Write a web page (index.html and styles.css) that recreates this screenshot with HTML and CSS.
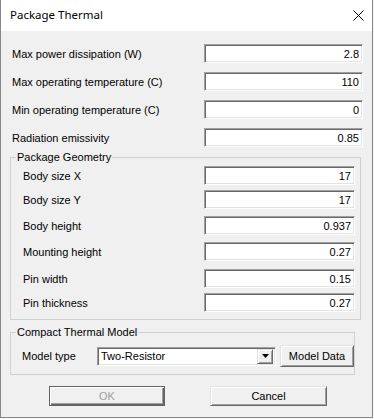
FILE: index.html
```html
<!DOCTYPE html>
<html lang="en">
<head>
  <meta charset="UTF-8">
  <title>Package Thermal</title>
  <link rel="stylesheet" href="styles.css">
</head>
<body>

  <div class="window">
    <div class="titlebar">
      <span class="title">Package Thermal</span>
      <svg class="close" width="11" height="11" viewBox="0 0 11 11">
        <path d="M0.5 0.5 L10.5 10.5 M10.5 0.5 L0.5 10.5" stroke="#000" stroke-width="1" fill="none"/>
      </svg>
    </div>

    <div class="client">
      <div class="row top"><label>Max power dissipation (W)</label><input class="field" value="2.8"></div>
      <div class="row top"><label>Max operating temperature (C)</label><input class="field" value="110"></div>
      <div class="row top"><label>Min operating temperature (C)</label><input class="field" value="0"></div>
      <div class="row top last"><label>Radiation emissivity</label><input class="field" value="0.85"></div>

      <fieldset class="group geo">
        <legend>Package Geometry</legend>
        <div class="row"><label>Body size X</label><input class="field" value="17"></div>
        <div class="row tight"><label>Body size Y</label><input class="field" value="17"></div>
        <div class="row"><label>Body height</label><input class="field" value="0.937"></div>
        <div class="row"><label>Mounting height</label><input class="field" value="0.27"></div>
        <div class="row wide"><label>Pin width</label><input class="field" value="0.15"></div>
        <div class="row tight"><label>Pin thickness</label><input class="field" value="0.27"></div>
      </fieldset>

      <fieldset class="group ctm">
        <legend>Compact Thermal Model</legend>
        <div class="model-row">
          <label>Model type</label>
          <div class="select">
            <span class="select-text">Two-Resistor</span>
            <span class="drop">
              <svg width="7" height="4" viewBox="0 0 7 4"><path d="M0 0 H7 L3.5 4 Z" fill="#000"/></svg>
            </span>
          </div>
          <button class="btn model-data">Model Data</button>
        </div>
      </fieldset>

      <div class="actions">
        <button class="btn default" disabled>OK</button>
        <button class="btn cancel">Cancel</button>
      </div>
    </div>
  </div>

</body>
</html>
```

FILE: styles.css
```css
* {
  margin: 0;
  padding: 0;
  box-sizing: border-box;
}

body {
  width: 374px;
  height: 419px;
  background: #f4f4f4;
  font-family: 'Liberation Sans', Arial, sans-serif;
  font-size: 11px;
  color: #000;
}

.window {
  width: 373px;
  height: 418px;
  background: #f0f0f0;
  border: 1px solid #888;
  border-top: none;
}

.titlebar {
  height: 31px;
  background: #fff;
  display: flex;
  align-items: center;
  justify-content: space-between;
  padding: 0 8px 0 9px;
}

.title {
  font-family: 'Noto Sans', sans-serif;
  font-size: 11.5px;
  margin-bottom: 2px;
}

.client {
  padding: 13px 9px 0 9px;
}

/* label + edit rows */
.row {
  display: flex;
  align-items: center;
  justify-content: space-between;
  height: 19px;
}

.row.top {
  padding-left: 2px;
  margin-bottom: 9px;
}

.row.top.last {
  margin-bottom: 0;
}

.field {
  width: 159px;
  height: 19px;
  font-family: inherit;
  font-size: 11px;
  color: #000;
  text-align: right;
  padding: 0 3px 0 2px;
  background: #fff;
  border: 1px solid;
  border-color: #a0a0a0 #fff #fff #a0a0a0;
  box-shadow: inset 1px 1px #696969, inset -1px -1px #e3e3e3;
  outline: none;
}

/* group boxes */
.group {
  border: 1px solid #d0d0d0;
}

.group legend {
  line-height: 13px;
  padding: 0 1px;
  margin-left: -7px;
}

.geo {
  margin: 4px 2px 0 0;
  padding: 2px 5px 7px 12px;
}

.geo .field {
  width: 151px;
}

.geo .row + .row {
  margin-top: 7px;
}

.geo .row.tight {
  margin-top: 5px;
}

.geo .row.wide {
  margin-top: 8px;
}

.ctm {
  margin: 6px 8px 0 0;
  padding: 6px 0 7px 11px;
}

.ctm legend {
  margin-left: -6px;
}

.model-row {
  display: flex;
  align-items: center;
  height: 22px;
}

.model-row label {
  width: 75px;
}

.select {
  width: 179px;
  height: 19px;
  display: flex;
  align-items: center;
  justify-content: space-between;
  background: #fff;
  border: 1px solid;
  border-color: #a0a0a0 #fff #fff #a0a0a0;
  box-shadow: inset 1px 1px #696969, inset -1px -1px #e3e3e3;
  padding: 2px 2px 2px 3px;
}

.drop {
  width: 16px;
  height: 15px;
  display: flex;
  align-items: center;
  justify-content: center;
  background: #f0f0f0;
  border: 1px solid;
  border-color: #e3e3e3 #696969 #696969 #e3e3e3;
  box-shadow: inset 1px 1px #fff, inset -1px -1px #a0a0a0;
}

/* push buttons */
.btn {
  font-family: inherit;
  font-size: 11px;
  color: #000;
  background: #f0f0f0;
  border: 1px solid;
  border-color: #e3e3e3 #696969 #696969 #e3e3e3;
  box-shadow: inset 1px 1px #fff, inset -1px -1px #a0a0a0;
}

.model-data {
  width: 74px;
  height: 22px;
  margin-left: 4px;
}

.actions {
  display: flex;
  gap: 45px;
  padding-left: 39px;
  margin-top: 11px;
}

.actions .btn {
  height: 20px;
  width: 117px;
}

.btn.default {
  width: 116px;
  color: #a0a0a0;
  border: 1px solid #646464;
  box-shadow: inset 1px 1px #fff, inset -1px -1px #646464, inset -2px -2px #a0a0a0;
}
```
